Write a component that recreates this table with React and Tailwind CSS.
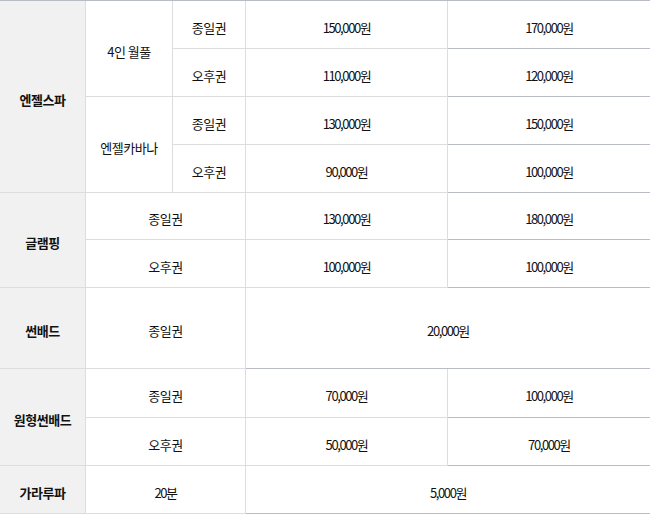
const H = "border-b border-[#b8bcc5]";
const V = "border-r border-[#dddddd]";

const rows = [
  { h: "h-[48px]", cells: [
    { t: "엔젤스파", head: true, rowSpan: 4 },
    { t: "4인 월풀", rowSpan: 2 },
    { t: "종일권" },
    { t: "150,000원", num: true },
    { t: "170,000원", num: true, last: true },
  ] },
  { h: "h-[48px]", cells: [
    { t: "오후권" },
    { t: "110,000원", num: true },
    { t: "120,000원", num: true, last: true },
  ] },
  { h: "h-[48px]", cells: [
    { t: "엔젤카바나", rowSpan: 2 },
    { t: "종일권" },
    { t: "130,000원", num: true },
    { t: "150,000원", num: true, last: true },
  ] },
  { h: "h-[48px]", cells: [
    { t: "오후권" },
    { t: "90,000원", num: true },
    { t: "100,000원", num: true, last: true },
  ] },
  { h: "h-[47px]", cells: [
    { t: "글램핑", head: true, rowSpan: 2 },
    { t: "종일권", colSpan: 2 },
    { t: "130,000원", num: true },
    { t: "180,000원", num: true, last: true },
  ] },
  { h: "h-[48px]", cells: [
    { t: "오후권", colSpan: 2 },
    { t: "100,000원", num: true },
    { t: "100,000원", num: true, last: true },
  ] },
  { h: "h-[81px]", cells: [
    { t: "썬배드", head: true },
    { t: "종일권", colSpan: 2 },
    { t: "20,000원", num: true, colSpan: 2, last: true },
  ] },
  { h: "h-[49px]", cells: [
    { t: "원형썬배드", head: true, rowSpan: 2 },
    { t: "종일권", colSpan: 2 },
    { t: "70,000원", num: true },
    { t: "100,000원", num: true, last: true },
  ] },
  { h: "h-[48px]", cells: [
    { t: "오후권", colSpan: 2 },
    { t: "50,000원", num: true },
    { t: "70,000원", num: true, last: true },
  ] },
  { h: "h-[48px]", cells: [
    { t: "가라루파", head: true },
    { t: "20분", num: true, colSpan: 2 },
    { t: "5,000원", num: true, colSpan: 2, last: true },
  ] },
];

export default function App() {
  return (
    <div className="w-[650px] h-[515px] bg-white overflow-hidden font-['Noto_Sans_CJK_KR','Noto_Sans',sans-serif] text-[13px] text-[#111]">
      <table className="w-[650px] table-fixed border-separate border-spacing-0 border-t border-[#b8bcc5]">
        <colgroup>
          <col className="w-[86px]" />
          <col className="w-[87px]" />
          <col className="w-[73px]" />
          <col className="w-[202px]" />
          <col className="w-[202px]" />
        </colgroup>
        <tbody>
          {rows.map((row, i) => (
            <tr key={i} className={row.h}>
              {row.cells.map((c, j) => (
                <td
                  key={j}
                  rowSpan={c.rowSpan}
                  colSpan={c.colSpan}
                  className={`${H} ${c.last ? "" : V} px-0 pb-0 pt-[5px] text-center align-middle leading-none ${
                    c.head ? "bg-[#f1f1f1] font-bold" : ""
                  } ${c.num ? "tracking-[-1.4px]" : "tracking-[-0.5px]"}`}
                >
                  {c.t}
                </td>
              ))}
            </tr>
          ))}
        </tbody>
      </table>
    </div>
  );
}
